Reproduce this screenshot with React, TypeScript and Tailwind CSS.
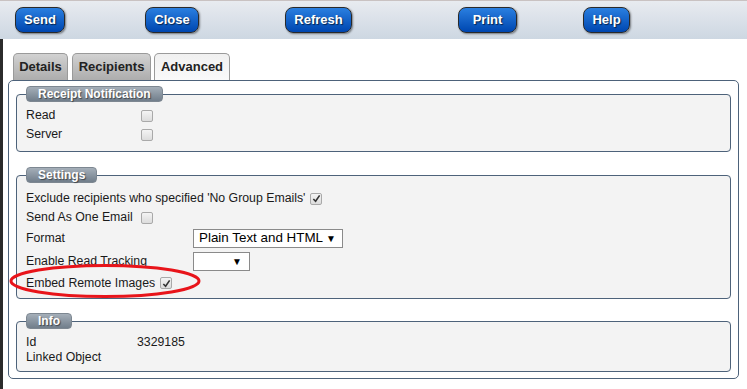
import React from "react";

const font = { fontFamily: '"Liberation Sans", Arial, sans-serif' };

const ToolButton = ({ label, className }: { label: string; className: string }) => (
  <button
    className={`h-[26px] rounded-[8px] border border-[#2a2a2a] bg-gradient-to-b from-[#2a7fe0] to-[#0046b0] text-[13px] font-bold text-white shadow-[1px_1px_2px_rgba(0,0,0,0.45)] [text-shadow:1px_1px_1px_rgba(0,0,0,0.6)] ${className}`}
  >
    {label}
  </button>
);

const Check = ({ checked = false }: { checked?: boolean }) => (
  <span className="inline-flex h-[12px] w-[12px] items-center justify-center rounded-[2px] border border-[#a9a9a9] bg-gradient-to-b from-[#f4f4f4] to-[#dcdcdc]">
    {checked && (
      <svg width="9" height="9" viewBox="0 0 10 10">
        <path d="M1.5 5.5 L4 8 L8.5 1.5" fill="none" stroke="#333" strokeWidth="1.8" />
      </svg>
    )}
  </span>
);

const Legend = ({ children }: { children: React.ReactNode }) => (
  <legend className="rounded-[4px] border border-[#7d8791] bg-gradient-to-b from-[#a5afb9] to-[#717e8b] px-[11px] text-[12px] leading-[14px] font-bold text-white [text-shadow:1px_1px_1px_rgba(0,0,0,0.5)]">
    {children}
  </legend>
);

const Tab = ({ label, active, className }: { label: string; active?: boolean; className: string }) => (
  <div
    className={`flex h-[27px] items-center justify-center rounded-t-[5px] border border-b-0 border-[#9a9a9a] text-[13px] font-bold text-[#222] ${
      active ? "bg-gradient-to-b from-[#f0f0f0] to-[#fafafa]" : "bg-gradient-to-b from-[#d2d2d2] to-[#adadad]"
    } ${className}`}
  >
    {label}
  </div>
);

export default function App() {
  return (
    <div className="relative h-[389px] w-[747px] overflow-hidden bg-white text-[12.3px] text-[#1a1a1a]" style={font}>
      <div className="h-px bg-[#c9c2c2]" />
      <div className="flex h-[38px] items-center bg-gradient-to-b from-[#e8ebf0] to-[#cdd7e2]">
        <ToolButton label="Send" className="ml-[15px] w-[50px]" />
        <ToolButton label="Close" className="ml-[80px] w-[54px]" />
        <ToolButton label="Refresh" className="ml-[86px] w-[67px]" />
        <ToolButton label="Print" className="ml-[106px] w-[59px]" />
        <ToolButton label="Help" className="ml-[66px] w-[47px]" />
      </div>
      <div className="flex">
        <div className="h-[350px] w-[3px] bg-[#2b2b2b]" />
        <div className="flex-1">
          <div className="mt-[14px] flex gap-[4px] pl-[10px]">
            <Tab label="Details" className="w-[55px]" />
            <Tab label="Recipients" className="w-[79px]" />
            <Tab label="Advanced" active className="-ml-[1px] w-[76px]" />
          </div>
          <div className="ml-[5px] w-[731px] rounded-[5px] border border-[#4d627a] bg-white px-[7px] pb-[6px] pt-[5px]">
            <fieldset className="rounded-[4px] border border-[#4d627a] bg-[#f3f3f3] px-[9px] pb-[7px] pt-[4px]">
              <Legend>Receipt Notification</Legend>
              <div className="flex h-[19px] items-center">
                <span className="w-[115px]">Read</span>
                <Check />
              </div>
              <div className="flex h-[19px] items-center">
                <span className="w-[115px]">Server</span>
                <Check />
              </div>
            </fieldset>

            <fieldset className="relative mt-[15px] rounded-[4px] border border-[#4d627a] bg-[#f3f3f3] px-[9px] pb-[4px] pt-[6px]">
              <Legend>Settings</Legend>
              <div className="flex h-[19px] items-center gap-[5px]">
                <span>Exclude recipients who specified 'No Group Emails'</span>
                <Check checked />
              </div>
              <div className="flex h-[19px] items-center gap-[8px]">
                <span>Send As One Email</span>
                <Check />
              </div>
              <div className="flex h-[23px] items-center">
                <span className="w-[167px]">Format</span>
                <div className="flex h-[19px] w-[150px] items-center justify-between border border-[#8a8a8a] bg-white pl-[5px] pr-[6px] text-[13.4px] text-black">
                  <span>Plain Text and HTML</span>
                  <span className="text-[10px]">▼</span>
                </div>
              </div>
              <div className="flex h-[22px] items-center">
                <span className="w-[167px]">Enable Read Tracking</span>
                <div className="flex h-[19px] w-[57px] items-center justify-end border border-[#8a8a8a] bg-white pr-[7px] text-black">
                  <span className="text-[10px]">▼</span>
                </div>
              </div>
              <div className="flex h-[22px] items-center gap-[5px]">
                <span>Embed Remote Images</span>
                <Check checked />
              </div>
              <svg className="pointer-events-none absolute left-[-9px] top-[80px]" width="194" height="36" viewBox="0 0 194 36">
                <ellipse cx="97" cy="18" rx="94" ry="15.5" fill="none" stroke="#e8141a" strokeWidth="3" />
              </svg>
            </fieldset>

            <fieldset className="mt-[14px] rounded-[4px] border border-[#4d627a] bg-[#f3f3f3] px-[9px] pb-[6px] pt-[6px]">
              <Legend>Info</Legend>
              <div className="flex h-[15px] items-center">
                <span className="w-[111px]">Id</span>
                <span>3329185</span>
              </div>
              <div className="flex h-[15px] items-center">
                <span>Linked Object</span>
              </div>
            </fieldset>
          </div>
        </div>
      </div>
    </div>
  );
}
